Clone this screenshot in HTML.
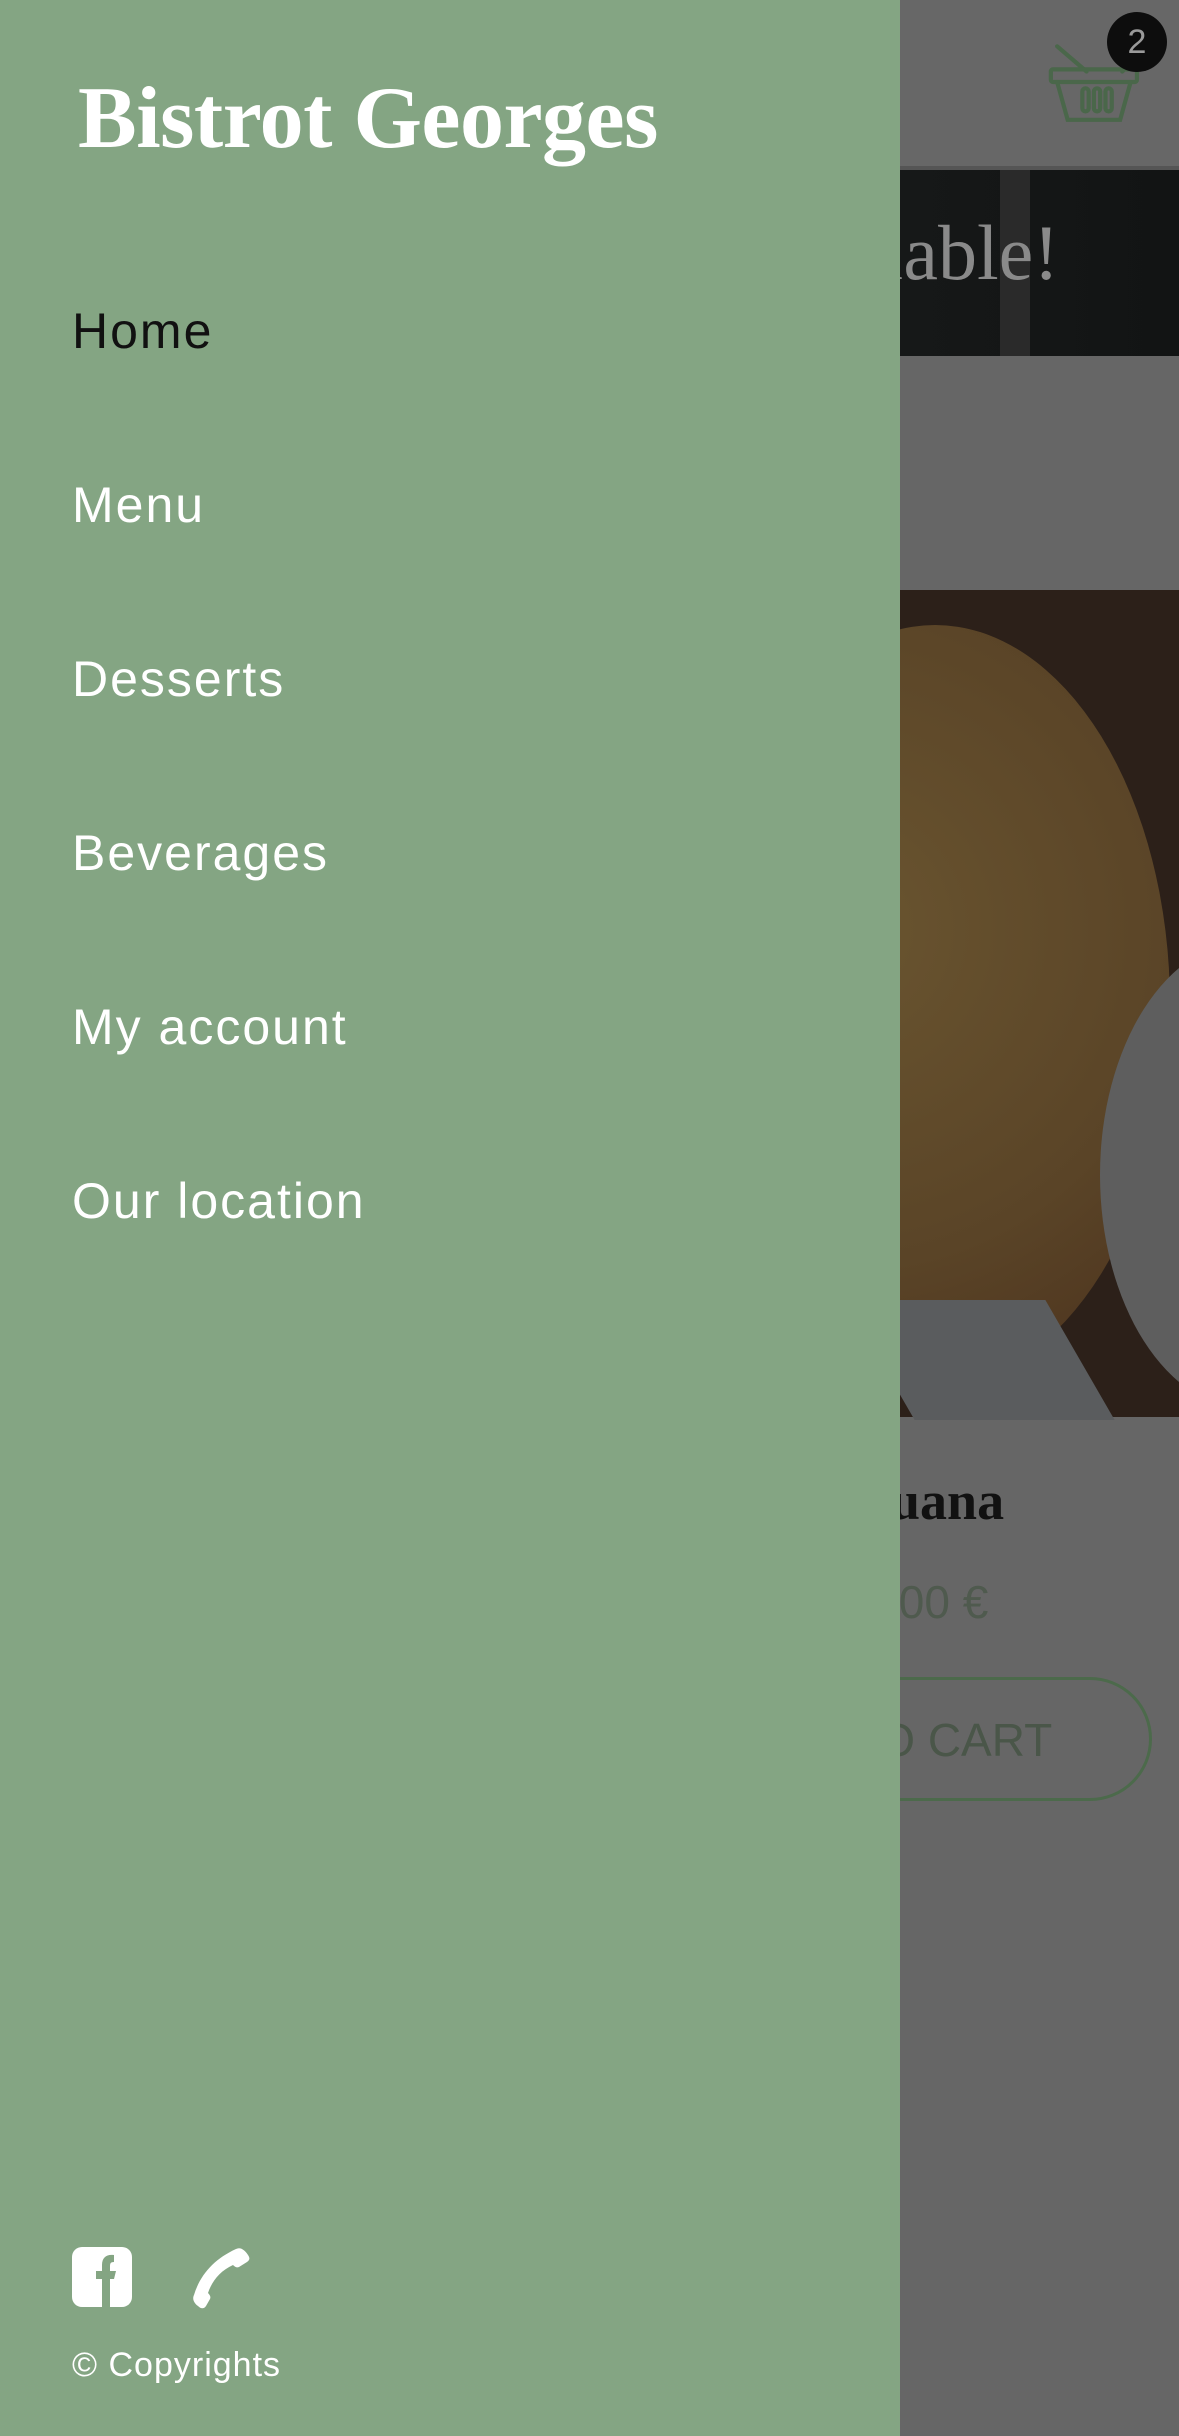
<!DOCTYPE html>
<html><head><meta charset="utf-8"><style>
*{margin:0;padding:0;box-sizing:border-box}
body{width:1179px;height:2436px;position:relative;overflow:hidden;background:#666;font-family:"Liberation Sans",sans-serif}
.bg{position:absolute;left:0;width:1179px}
.drawer{position:absolute;left:0;top:0;width:900px;height:2436px;background:#84a583}
.title{position:absolute;left:78px;top:68px;font-family:"Liberation Serif",serif;font-weight:bold;font-size:88px;color:#fff;letter-spacing:-0.5px}
.nav{position:absolute;left:72px;font-size:50px;color:#fff;letter-spacing:2px}
</style></head><body>
<div class="bg" style="top:0;height:166px;background:#676767"></div>
<div class="bg" style="top:166px;height:4px;background:#555"></div>
<div class="bg" style="top:170px;height:186px;background:linear-gradient(90deg,#161616,#1c1e1e 40%,#121414)"></div>
<div style="position:absolute;left:1000px;top:170px;width:30px;height:186px;background:#2a2a2a"></div>
<div style="position:absolute;left:860px;top:208px;font-family:'Liberation Serif',serif;font-size:78px;color:#8a8a8a">ilable!</div>
<div class="bg" style="top:590px;height:827px;background:#2c2019"></div>
<div style="position:absolute;left:700px;top:625px;width:470px;height:760px;border-radius:50%;background:radial-gradient(circle at 30% 40%,#6a5530,#5a4427 60%,#4a301c);"></div>
<div style="position:absolute;left:1100px;top:940px;width:300px;height:470px;border-radius:50%;background:#5e5e5e"></div>
<div style="position:absolute;left:880px;top:1300px;width:200px;height:120px;background:#5a5c5e;transform:skewX(30deg)"></div>
<div style="position:absolute;left:842px;top:1470px;font-family:'Liberation Serif',serif;font-weight:bold;font-size:54px;color:#111">Iguana</div>
<div style="position:absolute;left:886px;top:1575px;font-size:46px;color:#4f5a4e">,00 €</div>
<div style="position:absolute;left:700px;top:1677px;width:452px;height:124px;border:3px solid #4c6a4b;border-radius:62px;"></div>
<div style="position:absolute;left:852px;top:1713px;font-size:46px;color:#4a5649">TO CART</div>
<svg style="position:absolute;left:1048px;top:40px" width="96" height="84" viewBox="0 0 90 80" fill="none" stroke="#4a674a" stroke-width="4" stroke-linecap="round"><path d="M8 6 L36 30 M70 30 L80 20"/><rect x="2" y="28" width="82" height="12" rx="2"/><path d="M8 40 L18 76 L68 76 L78 40"/><rect x="32" y="46" width="6" height="22" rx="3"/><rect x="43" y="46" width="6" height="22" rx="3"/><rect x="54" y="46" width="6" height="22" rx="3"/></svg>
<div style="position:absolute;left:1107px;top:12px;width:60px;height:60px;border-radius:50%;background:#0d0d0d;color:#9a9a9a;font-size:34px;text-align:center;line-height:60px">2</div>
<div class="drawer">
<div class="title">Bistrot Georges</div>
<div class="nav" style="top:302px;color:#111">Home</div>
<div class="nav" style="top:476px">Menu</div>
<div class="nav" style="top:650px">Desserts</div>
<div class="nav" style="top:824px">Beverages</div>
<div class="nav" style="top:998px">My account</div>
<div class="nav" style="top:1172px">Our location</div>
<svg style="position:absolute;left:72px;top:2247px" width="60" height="60" viewBox="0 0 60 60"><rect width="60" height="60" rx="10" fill="#fff"/><path d="M30 60 V32 H24 V24 H30 V18 C30 10 35 7 42 8 V15 C38 15 38 17 38 20 V24 H44 L42 32 H38 V60Z" fill="#84a583"/></svg>
<svg style="position:absolute;left:190px;top:2247px" width="64" height="62" viewBox="0 0 64 62"><path d="M46 2 C50 0 54 2 58 8 C60 11 60 13 57 15 L49 20 C47 21 45 20 43 18 C30 24 22 34 18 46 C20 48 21 50 20 52 L16 59 C14 62 11 62 8 59 C4 56 2 52 4 48 C10 28 24 12 46 2Z" fill="#fff"/></svg>
<div style="position:absolute;left:72px;top:2346px;font-size:34px;color:#fff;letter-spacing:1px">© Copyrights</div>
</div>
</body></html>
